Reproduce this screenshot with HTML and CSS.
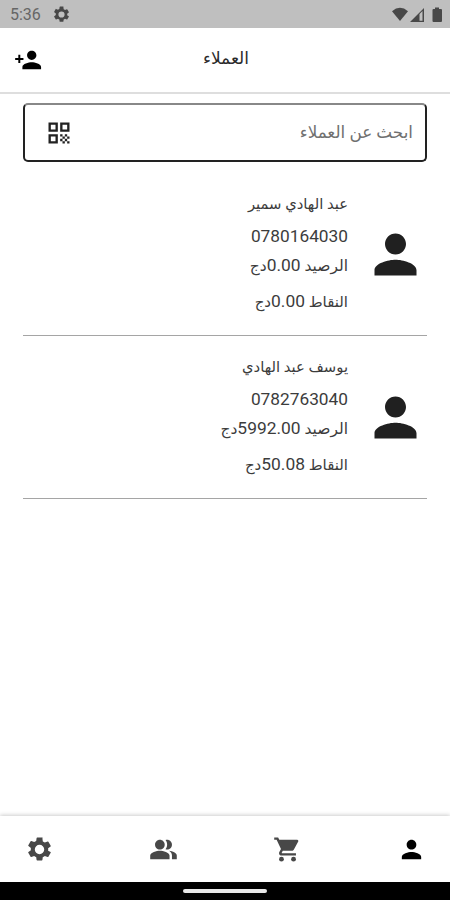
FILE: index.html
```html
<!DOCTYPE html>
<html lang="ar" dir="rtl">
<head>
<meta charset="utf-8">
<title>العملاء</title>
<link rel="stylesheet" href="styles.css">
</head>
<body>
<svg class="defs" aria-hidden="true">
<symbol id="gear" viewBox="0 0 24 24"><path d="M19.14 12.94c.04-.3.06-.61.06-.94s-.02-.64-.07-.94l2.03-1.58a.49.49 0 0 0 .12-.61l-1.92-3.32a.49.49 0 0 0-.59-.22l-2.39.96c-.5-.38-1.03-.7-1.62-.94l-.36-2.54A.48.48 0 0 0 13.92 2h-3.84a.48.48 0 0 0-.47.41l-.36 2.54c-.59.24-1.13.57-1.62.94l-2.39-.96a.49.49 0 0 0-.59.22L2.74 8.47a.48.48 0 0 0 .12.61l2.03 1.58c-.05.3-.09.63-.09.94s.02.64.07.94l-2.03 1.58a.49.49 0 0 0-.12.61l1.92 3.32c.12.22.37.29.59.22l2.39-.96c.5.38 1.03.7 1.62.94l.36 2.54c.05.24.24.41.48.41h3.84c.24 0 .44-.17.47-.41l.36-2.54c.59-.24 1.13-.56 1.62-.94l2.39.96c.22.08.47 0 .59-.22l1.92-3.32a.48.48 0 0 0-.12-.61zM12 15.900a3.900 3.900 0 1 1 0-7.800 3.900 3.900 0 0 1 0 7.800z"/></symbol>
<symbol id="person" viewBox="0 0 24 24"><path d="M12 12c2.21 0 4-1.79 4-4s-1.79-4-4-4-4 1.79-4 4 1.79 4 4 4zm0 2c-2.67 0-8 1.34-8 4v2h16v-2c0-2.66-5.33-4-8-4z"/></symbol>
</svg>
<div class="status">
  <span class="status-side"><span class="time">5:36</span><svg class="status-gear"><use href="#gear"/></svg></span>
  <svg class="signals" width="52" height="18" viewBox="0 0 52 18">
    <path d="M1 5.200Q9 -1.500 17 5.200L9 15z"/>
    <path d="M19 16L33 2v14z M28.500 8v6.700h3V5z" fill-rule="evenodd"/>
    <path d="M44 1.500h4V3h2q1 0 1 1v11q0 1-1 1h-7.500q-1 0-1-1V4q0-1 1-1H44z"/>
  </svg>
</div>
<header class="topbar">
  <svg class="add" viewBox="0 0 24 24"><path d="M15.200 12c2.210 0 4-1.790 4-4s-1.790-4-4-4-4 1.790-4 4 1.790 4 4 4zM5.400 10.200V7.500H3.700v2.700H1v1.700h2.700v2.700h1.700v-2.700h2.700v-1.700zm9.800 3.800c-2.670 0-8 1.340-8 4v2h16v-2c0-2.660-5.330-4-8-4z"/></svg>
  <h1 class="title">العملاء</h1>
</header>
<main class="content">
  <div class="search">
    <span class="hint">ابحث عن العملاء</span>
    <svg class="qr" viewBox="0 0 24 24"><path fill-rule="evenodd" d="M3 3h8v8H3zm2 2v4h4V5zM13 3h8v8h-8zm2 2v4h4V5zM3 13h8v8H3zm2 2v4h4v-4z"/><path d="M13 13h2v2h-2zM15 15h2v2h-2zM17 13h2v2h-2zM19 15h2v2h-2zM13 17h2v2h-2zM15 19h2v2h-2zM17 17h2v2h-2zM19 19h2v2h-2z"/></svg>
  </div>
  <article class="customer">
    <svg class="avatar"><use href="#person"/></svg>
    <div class="info">
      <p class="name">عبد الهادي سمير</p>
      <p class="phone">0780164030</p>
      <p class="balance">الرصيد <b>0.00</b>دج</p>
      <p class="points">النقاط <b>0.00</b>دج</p>
    </div>
  </article>
  <article class="customer">
    <svg class="avatar"><use href="#person"/></svg>
    <div class="info">
      <p class="name">يوسف عبد الهادي</p>
      <p class="phone">0782763040</p>
      <p class="balance">الرصيد <b>5992.00</b>دج</p>
      <p class="points">النقاط <b>50.08</b>دج</p>
    </div>
  </article>
</main>
<nav class="tabs">
  <svg><use href="#gear"/></svg>
  <svg viewBox="0 0 24 24"><path d="M16.670 13.130C18.040 14.060 19 15.320 19 17v3h4v-3c0-2.180-3.570-3.470-6.330-3.870zM15 12c2.210 0 4-1.790 4-4s-1.790-4-4-4c-.470 0-.910.100-1.330.240C14.500 5.270 15 6.580 15 8s-.500 2.730-1.330 3.760c.420.140.860.240 1.330.240z"/><path d="M9 12c2.210 0 4-1.790 4-4s-1.790-4-4-4-4 1.790-4 4 1.790 4 4 4zm0 1c-2.670 0-8 1.340-8 4v3h16v-3c0-2.660-5.330-4-8-4z"/></svg>
  <svg viewBox="0 0 24 24"><path d="M1 2v2h2l3.600 7.590-1.350 2.450c-.160.280-.250.610-.250.960 0 1.100.900 2 2 2h12v-2H7.420c-.140 0-.250-.110-.250-.250l.030-.120.900-1.630h7.450c.750 0 1.410-.410 1.750-1.030l3.580-6.490A1 1 0 0 0 20 4H5.210l-.940-2z"/><circle cx="7" cy="20" r="2"/><circle cx="17" cy="20" r="2"/></svg>
  <svg class="active"><use href="#person"/></svg>
</nav>
<footer class="gesture"><span class="handle"></span></footer>
</body>
</html>
```
FILE: styles.css
```css
* { box-sizing: border-box; }
body {
  margin: 0;
  width: 450px;
  height: 900px;
  display: flex;
  flex-direction: column;
  overflow: hidden;
  background: #fff;
  color: #3c3c3c;
  font-family: Roboto, "DejaVu Sans", sans-serif;
}
.defs { display: none; }
svg { display: block; flex: none; fill: currentColor; }
.status {
  direction: ltr;
  flex: none;
  height: 28px;
  padding: 1px 7px 0 10px;
  display: flex;
  align-items: center;
  justify-content: space-between;
  background: #bfbfbf;
  color: #484848;
}
.status-side { display: flex; align-items: center; gap: 11px; }
.time { width: 31px; font-size: 16px; color: #666; white-space: nowrap; }
.status-gear { width: 19px; height: 19px; }
.topbar {
  direction: ltr;
  flex: none;
  height: 66px;
  display: grid;
  grid-template-columns: 60px 1fr 60px;
  align-items: center;
  border-bottom: 2px solid #dedede;
}
.add { width: 28px; height: 28px; margin-left: 14px; color: #000; }
.title {
  margin: 0;
  padding: 0 0 4px 2px;
  text-align: center;
  font-size: 17px;
  font-weight: 400;
  color: #2a2a2a;
}
.content { flex: 1; padding: 9px 23px 0; }
.search {
  height: 59px;
  padding: 0 12px 0 20px;
  display: flex;
  align-items: center;
  justify-content: space-between;
  border: 2px solid #222;
  border-top-color: #888;
  border-radius: 5px;
}
.hint { padding-bottom: 2px; font-size: 16.8px; color: #707070; }
.qr { width: 28px; height: 28px; color: #222; }
.customer {
  height: 163px;
  display: flex;
  border-bottom: 1px solid #a5a5a5;
}
.search + .customer { height: 174px; padding-top: 11px; }
.avatar { width: 63px; height: 63px; margin-top: 50px; color: #202020; }
.info { padding: 19px 16px 0 0; }
.info p { margin: 0; font-size: 15px; line-height: 24px; white-space: nowrap; }
.info b { font-weight: 400; font-size: 17.4px; }
.info .name { font-size: 14.8px; }
.info .phone { margin-top: 8px; font-size: 17.3px; }
.info .balance { margin-top: 5px; font-size: 15.5px; }
.info .points { margin-top: 11px; }
.tabs {
  direction: ltr;
  flex: none;
  height: 66px;
  padding: 0 24px 0 25px;
  display: flex;
  align-items: center;
  justify-content: space-between;
  color: #484848;
  box-shadow: 0 -1px 4px rgba(0, 0, 0, .2);
}
.tabs svg { width: 29px; height: 29px; }
.tabs .active { color: #000; }
.gesture {
  flex: none;
  height: 18px;
  display: flex;
  align-items: center;
  justify-content: center;
  background: #000;
}
.handle { width: 84px; height: 4px; border-radius: 2px; background: #e8e8e8; }
```
